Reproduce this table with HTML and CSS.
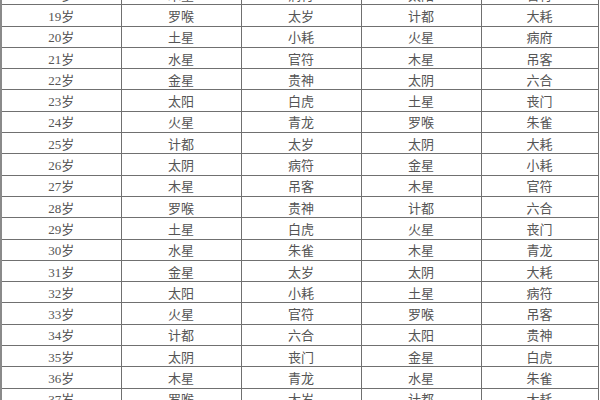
FILE: index.html
```html
<!DOCTYPE html>
<html lang="zh-CN">
<head>
<meta charset="utf-8">
<title>流年表</title>
<link rel="stylesheet" href="styles.css">
</head>
<body>
<div class="sheet">
<table class="grid">
<colgroup><col class="c1"><col class="c2"><col class="c3"><col class="c4"><col class="c5"></colgroup>
<tbody>
<tr><td>18岁</td><td>木星</td><td>病符</td><td>太阳</td><td>官符</td></tr>
<tr><td>19岁</td><td>罗喉</td><td>太岁</td><td>计都</td><td>大耗</td></tr>
<tr><td>20岁</td><td>土星</td><td>小耗</td><td>火星</td><td>病府</td></tr>
<tr><td>21岁</td><td>水星</td><td>官符</td><td>木星</td><td>吊客</td></tr>
<tr><td>22岁</td><td>金星</td><td>贵神</td><td>太阴</td><td>六合</td></tr>
<tr><td>23岁</td><td>太阳</td><td>白虎</td><td>土星</td><td>丧门</td></tr>
<tr><td>24岁</td><td>火星</td><td>青龙</td><td>罗喉</td><td>朱雀</td></tr>
<tr><td>25岁</td><td>计都</td><td>太岁</td><td>太阴</td><td>大耗</td></tr>
<tr><td>26岁</td><td>太阴</td><td>病符</td><td>金星</td><td>小耗</td></tr>
<tr><td>27岁</td><td>木星</td><td>吊客</td><td>木星</td><td>官符</td></tr>
<tr><td>28岁</td><td>罗喉</td><td>贵神</td><td>计都</td><td>六合</td></tr>
<tr><td>29岁</td><td>土星</td><td>白虎</td><td>火星</td><td>丧门</td></tr>
<tr><td>30岁</td><td>水星</td><td>朱雀</td><td>木星</td><td>青龙</td></tr>
<tr><td>31岁</td><td>金星</td><td>太岁</td><td>太阴</td><td>大耗</td></tr>
<tr><td>32岁</td><td>太阳</td><td>小耗</td><td>土星</td><td>病符</td></tr>
<tr><td>33岁</td><td>火星</td><td>官符</td><td>罗喉</td><td>吊客</td></tr>
<tr><td>34岁</td><td>计都</td><td>六合</td><td>太阳</td><td>贵神</td></tr>
<tr><td>35岁</td><td>太阴</td><td>丧门</td><td>金星</td><td>白虎</td></tr>
<tr><td>36岁</td><td>木星</td><td>青龙</td><td>水星</td><td>朱雀</td></tr>
<tr><td>37岁</td><td>罗喉</td><td>太岁</td><td>计都</td><td>大耗</td></tr>
</tbody>
</table>
</div>
</body>
</html>
```

FILE: styles.css
```css
html, body {
  margin: 0;
  padding: 0;
  background: #ffffff;
}
body {
  width: 600px;
  height: 400px;
  overflow: hidden;
  font-family: "Liberation Serif", "Noto Sans CJK SC", serif;
}
.sheet {
  width: 600px;
  height: 400px;
  overflow: hidden;
}
.grid {
  margin-top: -17px;
  width: 598px;
  border-collapse: collapse;
  table-layout: fixed;
  border-left: 2px solid #8a8a8a;
}
.c1, .c2, .c3, .c4 { width: 120px; }
.c5 { width: 117px; }
.grid tr {
  height: 21.3px;
}
.grid td {
  border: 1px solid #707070;
  padding: 2px 0 0 0;
  text-align: center;
  vertical-align: middle;
  font-size: 13px;
  line-height: 17px;
  color: #555555;
  white-space: nowrap;
}
.grid td:first-child {
  border-left: 2px solid #8a8a8a;
}
```
